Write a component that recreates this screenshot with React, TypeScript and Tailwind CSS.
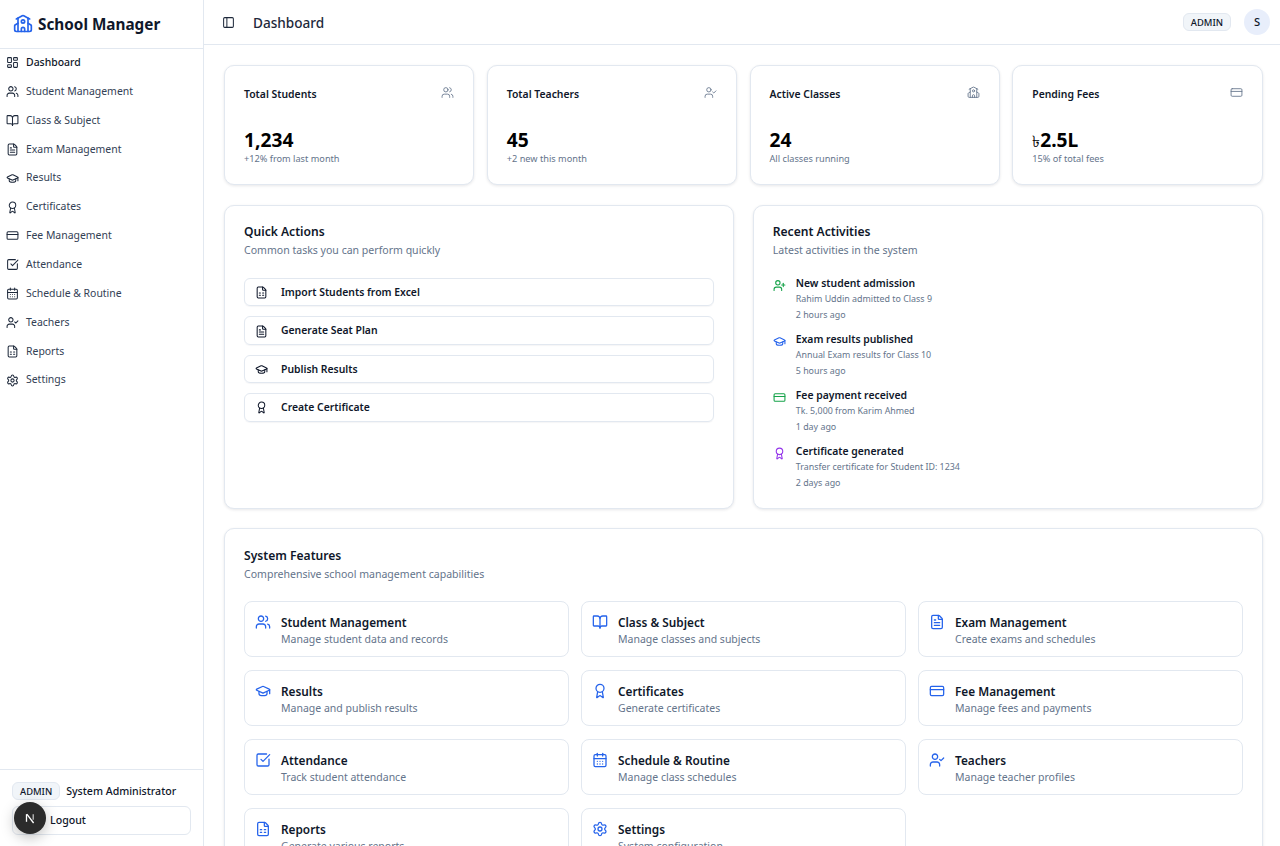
import type { ReactNode } from "react";
import {
  Award,
  BookOpen,
  CalendarDays,
  CreditCard,
  FileSpreadsheet,
  FileText,
  GraduationCap,
  LayoutDashboard,
  PanelLeft,
  School,
  Settings,
  SquareCheckBig,
  UserCheck,
  UserPlus,
  Users,
} from "lucide-react";

const nav = [
  { label: "Dashboard", icon: LayoutDashboard, active: true },
  { label: "Student Management", icon: Users },
  { label: "Class & Subject", icon: BookOpen },
  { label: "Exam Management", icon: FileText },
  { label: "Results", icon: GraduationCap },
  { label: "Certificates", icon: Award },
  { label: "Fee Management", icon: CreditCard },
  { label: "Attendance", icon: SquareCheckBig },
  { label: "Schedule & Routine", icon: CalendarDays },
  { label: "Teachers", icon: UserCheck },
  { label: "Reports", icon: FileSpreadsheet },
  { label: "Settings", icon: Settings },
];

const stats = [
  { title: "Total Students", value: "1,234", note: "+12% from last month", icon: Users },
  { title: "Total Teachers", value: "45", note: "+2 new this month", icon: UserCheck },
  { title: "Active Classes", value: "24", note: "All classes running", icon: School },
  { title: "Pending Fees", value: "2.5L", prefix: "৳", note: "15% of total fees", icon: CreditCard },
];

const actions = [
  { label: "Import Students from Excel", icon: FileSpreadsheet },
  { label: "Generate Seat Plan", icon: FileText },
  { label: "Publish Results", icon: GraduationCap },
  { label: "Create Certificate", icon: Award },
];

const activities = [
  { title: "New student admission", detail: "Rahim Uddin admitted to Class 9", time: "2 hours ago", icon: UserPlus, color: "text-[#16a34a]" },
  { title: "Exam results published", detail: "Annual Exam results for Class 10", time: "5 hours ago", icon: GraduationCap, color: "text-[#2563eb]" },
  { title: "Fee payment received", detail: "Tk. 5,000 from Karim Ahmed", time: "1 day ago", icon: CreditCard, color: "text-[#16a34a]" },
  { title: "Certificate generated", detail: "Transfer certificate for Student ID: 1234", time: "2 days ago", icon: Award, color: "text-[#9333ea]" },
];

const features = [
  { title: "Student Management", text: "Manage student data and records", icon: Users },
  { title: "Class & Subject", text: "Manage classes and subjects", icon: BookOpen },
  { title: "Exam Management", text: "Create exams and schedules", icon: FileText },
  { title: "Results", text: "Manage and publish results", icon: GraduationCap },
  { title: "Certificates", text: "Generate certificates", icon: Award },
  { title: "Fee Management", text: "Manage fees and payments", icon: CreditCard },
  { title: "Attendance", text: "Track student attendance", icon: SquareCheckBig },
  { title: "Schedule & Routine", text: "Manage class schedules", icon: CalendarDays },
  { title: "Teachers", text: "Manage teacher profiles", icon: UserCheck },
  { title: "Reports", text: "Generate various reports", icon: FileSpreadsheet },
  { title: "Settings", text: "System configuration", icon: Settings },
];

function Card({ className, children }: { className: string; children: ReactNode }) {
  return (
    <div className={`rounded-[10px] border border-[#e2e8f0] bg-white shadow-[0_1px_3px_rgba(15,23,42,0.1)] ${className}`}>
      {children}
    </div>
  );
}

function CardHead({ title, text }: { title: string; text: string }) {
  return (
    <>
      <h3 className="text-[12.1px] leading-[18px] font-semibold text-[#0f172a]">{title}</h3>
      <p className="text-[10.55px] leading-[18px] text-[#64748b]">{text}</p>
    </>
  );
}

export default function App() {
  return (
    <div className="flex h-[846px] overflow-hidden bg-white font-['Noto_Sans',sans-serif] text-[#0f172a]">
      {/* Sidebar */}
      <aside className="relative flex w-[204px] shrink-0 flex-col border-r border-[#e2e8f0]">
        <div className="flex h-[49px] items-center gap-[5px] border-b border-[#e2e8f0] pl-[13px]">
          <School size={20} className="text-[#2563eb]" />
          <span className="text-[15.3px] font-bold">School Manager</span>
        </div>
        <nav className="flex flex-col">
          {nav.map((item) => (
            <div
              key={item.label}
              className={`flex h-[28.85px] items-center gap-[7px] pl-[6px] pb-[1px] text-[10.45px] ${item.active ? "font-medium text-[#0f172a]" : "text-[#334155]"}`}
            >
              <item.icon size={13} strokeWidth={1.9} className="text-[#1e293b]" />
              <span>{item.label}</span>
            </div>
          ))}
        </nav>
        <div className="mt-auto h-[77px] border-t border-[#e2e8f0] px-[12px] pt-[12px]">
          <div className="flex items-center gap-[6px]">
            <span className="rounded-[6px] border border-[#e2e8f0] bg-[#f1f5f9] px-[7px] pt-[2px] text-[9.4px] leading-[14px] font-medium">ADMIN</span>
            <span className="mt-[2px] text-[10.6px] font-medium">System Administrator</span>
          </div>
          <div className="mt-[6px] flex h-[29px] w-[179px] items-center rounded-[6px] border border-[#e2e8f0] pl-[37px] text-[10.6px] font-medium">
            Logout
          </div>
        </div>
        <div className="absolute bottom-[12px] left-[14px] flex h-[32px] w-[32px] items-center justify-center rounded-full bg-[#2b2b2b] shadow-[0_4px_14px_rgba(0,0,0,0.25)]">
          <svg width="14" height="14" viewBox="0 0 14 14" fill="none">
            <path d="M3.5 3.2v7.6" stroke="#fff" strokeWidth="1.3" />
            <path d="M3.8 3.2 10.6 12" stroke="#fff" strokeWidth="1.3" />
            <path d="M10.2 3.2v5.6" stroke="#ccc" strokeWidth="1.2" />
          </svg>
        </div>
      </aside>

      <div className="flex min-w-0 flex-1 flex-col">
        {/* Top bar */}
        <header className="flex h-[45px] shrink-0 items-center border-b border-[#e2e8f0] pl-[18px] pr-[10px]">
          <PanelLeft size={13} strokeWidth={1.9} className="text-[#1e293b]" />
          <span className="ml-[18px] mt-[3px] text-[13.6px] font-medium text-[#1e293b]">Dashboard</span>
          <span className="ml-auto rounded-[6px] border border-[#e2e8f0] bg-[#f1f5f9] px-[7px] pt-[2px] text-[9.4px] leading-[14px] font-medium">ADMIN</span>
          <span className="ml-[13px] flex h-[26px] w-[26px] items-center justify-center rounded-full bg-[#e8eefb] text-[11.2px] font-medium">S</span>
        </header>

        <main className="flex flex-col gap-[20px] p-[20px] pr-[17.5px]">
          <div className="grid grid-cols-4 gap-[12.5px]">
            {stats.map((s) => (
              <Card key={s.title} className="h-[120px] px-[19px] pt-[20px]">
                <div className="flex items-start justify-between">
                  <span className="text-[10.4px] leading-[17px] font-semibold">{s.title}</span>
                  <s.icon size={13} strokeWidth={1.6} className="text-[#64748b]" />
                </div>
                <div className="mt-[23px] flex h-[28px] items-baseline text-[19.2px] leading-[28px] font-bold text-black">
                  {s.prefix && <span className="text-[16px] leading-none font-normal">{s.prefix}</span>}
                  {s.value}
                </div>
                <div className="mt-[-1px] text-[9.2px] leading-[12px] text-[#64748b]">{s.note}</div>
              </Card>
            ))}
          </div>

          <div className="grid grid-cols-2 gap-[19px]">
            <Card className="h-[304px] px-[19px] pt-[17px]">
              <CardHead title="Quick Actions" text="Common tasks you can perform quickly" />
              <div className="mt-[19px] flex flex-col gap-[10px]">
                {actions.map((a) => (
                  <div key={a.label} className="flex h-[28.4px] items-center rounded-[6px] border border-[#e2e8f0] pl-[10px] pt-[1px] text-[10.4px] font-semibold shadow-[0_1px_1px_rgba(15,23,42,0.04)]">
                    <a.icon size={13} strokeWidth={1.9} />
                    <span className="ml-[13px]">{a.label}</span>
                  </div>
                ))}
              </div>
            </Card>
            <Card className="h-[304px] px-[19px] pt-[17px]">
              <CardHead title="Recent Activities" text="Latest activities in the system" />
              <div className="mt-[17px] flex flex-col gap-[8px]">
                {activities.map((a) => (
                  <div key={a.title} className="flex h-[48px] gap-[10px]">
                    <a.icon size={13} strokeWidth={2} className={`mt-[3px] ${a.color}`} />
                    <div>
                      <p className="text-[10.4px] leading-[15px] font-semibold">{a.title}</p>
                      <p className="text-[8.9px] leading-[15px] text-[#64748b]">{a.detail}</p>
                      <p className="mt-[1px] text-[8.9px] leading-[15px] text-[#64748b]">{a.time}</p>
                    </div>
                  </div>
                ))}
              </div>
            </Card>
          </div>

          <Card className="mt-[-1px] px-[19px] pt-[18px] pb-[20px]">
            <CardHead title="System Features" text="Comprehensive school management capabilities" />
            <div className="mt-[18px] grid grid-cols-3 gap-x-[12.5px] gap-y-[13px]">
              {features.map((f) => (
                <div key={f.title} className="flex h-[56px] gap-[10px] rounded-[8px] border border-[#e2e8f0] pl-[10px] pt-[12px]">
                  <f.icon size={16} strokeWidth={1.9} className="text-[#2563eb]" />
                  <div>
                    <p className="text-[11.8px] leading-[16px] font-semibold">{f.title}</p>
                    <p className="mt-[1px] text-[10.5px] leading-[16px] text-[#64748b]">{f.text}</p>
                  </div>
                </div>
              ))}
            </div>
          </Card>
        </main>
      </div>
    </div>
  );
}
